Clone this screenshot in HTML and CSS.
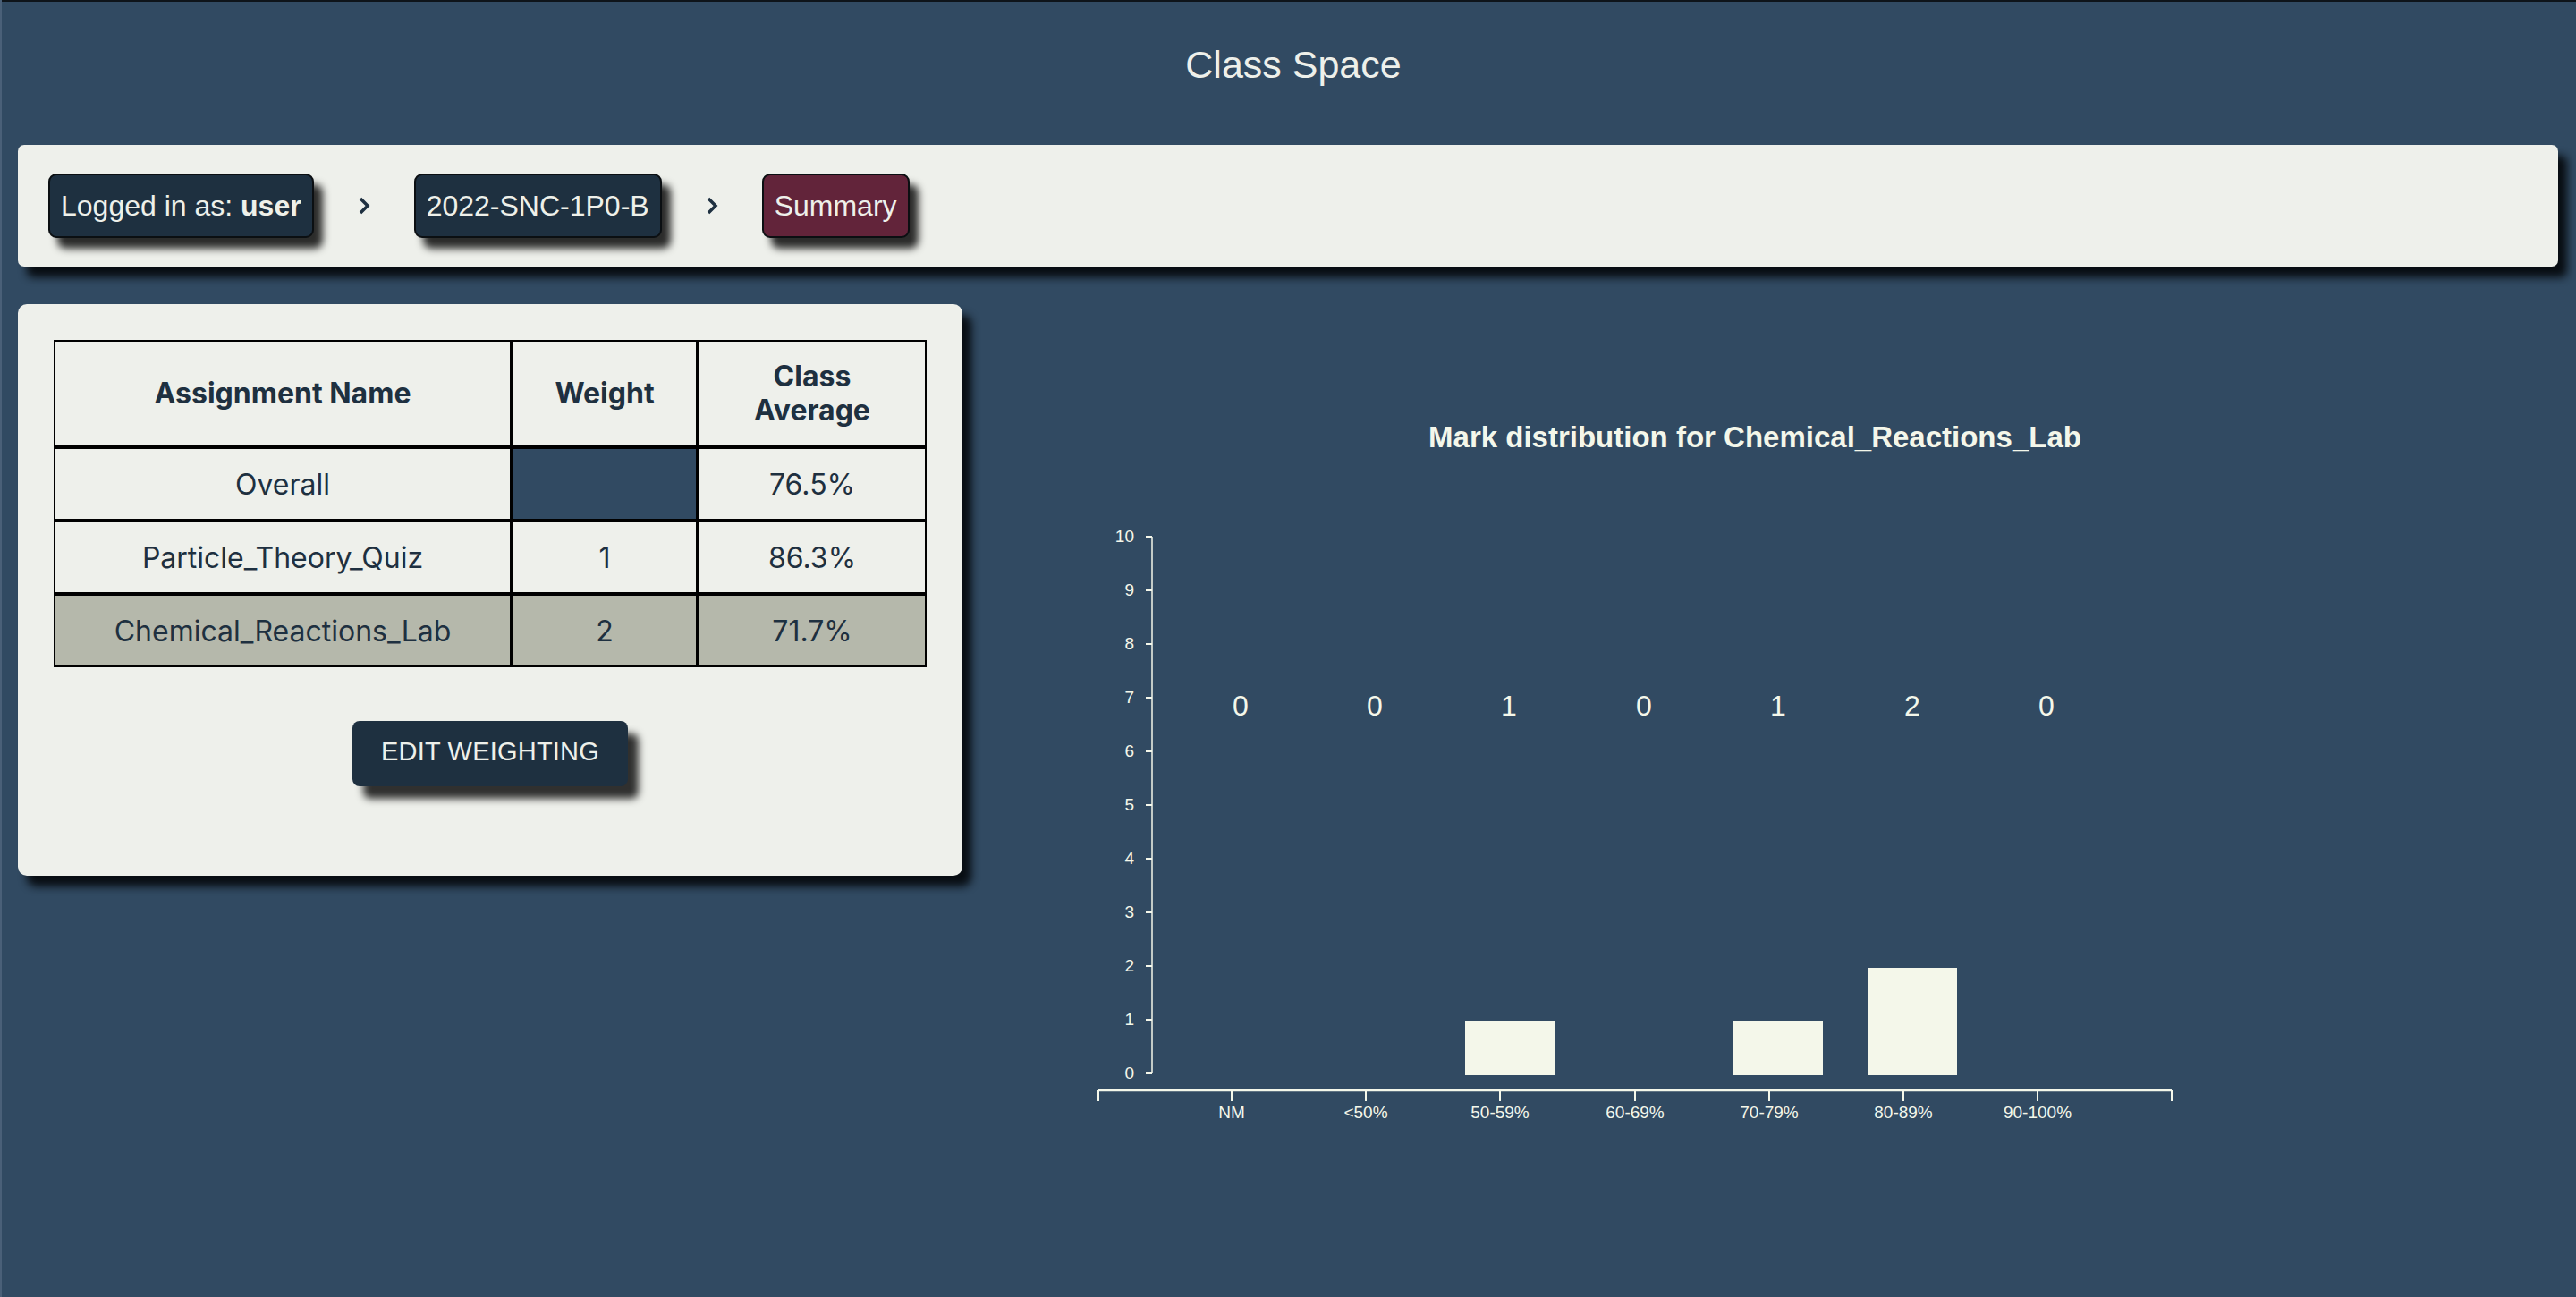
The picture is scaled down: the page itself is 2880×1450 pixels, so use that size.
FILE: index.html
```html
<!DOCTYPE html>
<html lang="en">
<head>
<meta charset="utf-8">
<title>Class Space</title>
<link rel="stylesheet" href="styles.css">
</head>
<body>
<header class="app-header">
  <h1 class="app-title">Class Space</h1>
</header>

<nav class="crumbs">
  <span class="crumb">Logged in as: <b>user</b></span>
  <svg class="chev" width="14" height="20" viewBox="0 0 14 20"><polyline points="3,2 11,10 3,18" fill="none" stroke="#1e3040" stroke-width="3.5"/></svg>
  <span class="crumb">2022-SNC-1P0-B</span>
  <svg class="chev" width="14" height="20" viewBox="0 0 14 20"><polyline points="3,2 11,10 3,18" fill="none" stroke="#1e3040" stroke-width="3.5"/></svg>
  <span class="crumb crumb-active">Summary</span>
</nav>

<main class="content">
  <section class="card">
    <table class="grades">
      <colgroup>
        <col class="c-name">
        <col class="c-weight">
        <col class="c-avg">
      </colgroup>
      <thead>
        <tr class="head-row">
          <th>Assignment Name</th>
          <th>Weight</th>
          <th>Class<br>Average</th>
        </tr>
      </thead>
      <tbody>
        <tr class="row">
          <td>Overall</td>
          <td class="blank"></td>
          <td>76.5%</td>
        </tr>
        <tr class="row">
          <td>Particle_Theory_Quiz</td>
          <td>1</td>
          <td>86.3%</td>
        </tr>
        <tr class="row selected">
          <td>Chemical_Reactions_Lab</td>
          <td>2</td>
          <td>71.7%</td>
        </tr>
      </tbody>
    </table>
    <div class="actions">
      <button class="edit-btn">EDIT WEIGHTING</button>
    </div>
  </section>

  <section class="chart-area">
    <svg class="chart" width="1744" height="960" viewBox="0 0 1744 960">
      <text class="chart-title" x="846" y="160" text-anchor="middle">Mark distribution for Chemical_Reactions_Lab</text>

      <!-- y axis -->
      <line class="axis" x1="172" y1="260" x2="172" y2="860" stroke-width="1.5"/>
      <g class="yticks">
        <line x1="165" y1="260" x2="172" y2="260"/>
        <line x1="165" y1="320" x2="172" y2="320"/>
        <line x1="165" y1="380" x2="172" y2="380"/>
        <line x1="165" y1="440" x2="172" y2="440"/>
        <line x1="165" y1="500" x2="172" y2="500"/>
        <line x1="165" y1="560" x2="172" y2="560"/>
        <line x1="165" y1="620" x2="172" y2="620"/>
        <line x1="165" y1="680" x2="172" y2="680"/>
        <line x1="165" y1="740" x2="172" y2="740"/>
        <line x1="165" y1="800" x2="172" y2="800"/>
        <line x1="165" y1="860" x2="172" y2="860"/>
      </g>
      <g class="ylabels" text-anchor="end">
        <text x="152" y="266">10</text>
        <text x="152" y="326">9</text>
        <text x="152" y="386">8</text>
        <text x="152" y="446">7</text>
        <text x="152" y="506">6</text>
        <text x="152" y="566">5</text>
        <text x="152" y="626">4</text>
        <text x="152" y="686">3</text>
        <text x="152" y="746">2</text>
        <text x="152" y="806">1</text>
        <text x="152" y="866">0</text>
      </g>

      <!-- bars -->
      <rect class="bar" x="522" y="802" width="100" height="60"/>
      <rect class="bar" x="822" y="802" width="100" height="60"/>
      <rect class="bar" x="972" y="742" width="100" height="120"/>

      <!-- counts -->
      <g class="counts" text-anchor="middle">
        <text x="271" y="460">0</text>
        <text x="421" y="460">0</text>
        <text x="571" y="460">1</text>
        <text x="722" y="460">0</text>
        <text x="872" y="460">1</text>
        <text x="1022" y="460">2</text>
        <text x="1172" y="460">0</text>
      </g>

      <!-- x axis -->
      <line class="axis" x1="112" y1="879" x2="1312" y2="879" stroke-width="2.5"/>
      <g class="xticks">
        <line x1="112" y1="879" x2="112" y2="891"/>
        <line x1="261" y1="879" x2="261" y2="891"/>
        <line x1="411" y1="879" x2="411" y2="891"/>
        <line x1="561" y1="879" x2="561" y2="891"/>
        <line x1="712" y1="879" x2="712" y2="891"/>
        <line x1="862" y1="879" x2="862" y2="891"/>
        <line x1="1012" y1="879" x2="1012" y2="891"/>
        <line x1="1162" y1="879" x2="1162" y2="891"/>
        <line x1="1312" y1="879" x2="1312" y2="891"/>
      </g>
      <g class="xlabels" text-anchor="middle">
        <text x="261" y="910">NM</text>
        <text x="411" y="910">&lt;50%</text>
        <text x="561" y="910">50-59%</text>
        <text x="712" y="910">60-69%</text>
        <text x="862" y="910">70-79%</text>
        <text x="1012" y="910">80-89%</text>
        <text x="1162" y="910">90-100%</text>
      </g>
    </svg>
  </section>
</main>
</body>
</html>
```

FILE: styles.css
```css
html {
  background: #314a62;
}

body {
  margin: 0;
  min-height: 1450px;
  background: #314a62;
  font-family: "Liberation Sans", Arial, sans-serif;
  color: #eef0ea;
  box-shadow: inset 2px 0 0 #4a6078, inset 0 2px 0 #0e141a;
}

.app-header {
  height: 142px;
  display: flex;
  align-items: center;
  justify-content: center;
}

.app-title {
  margin: 2px 0 0;
  padding-left: 12px;
  font-family: "Liberation Sans", Arial, sans-serif;
  font-weight: 400;
  font-size: 43px;
  color: #eef0ea;
}

.crumbs {
  margin: 20px 20px 0;
  padding: 32px 32px 32px 34px;
  background: #eef0eb;
  border-radius: 7px;
  display: flex;
  align-items: center;
  box-shadow: 10px 12px 10px rgba(6, 11, 15, 0.95);
}

.crumb {
  display: inline-block;
  box-sizing: border-box;
  height: 72px;
  line-height: 68px;
  padding: 0 12px;
  border: 2px solid #0b0f12;
  border-radius: 9px;
  background: #1e3040;
  color: #eef0ea;
  font-size: 32px;
  box-shadow: 10px 12px 8px rgba(0, 0, 0, 0.82);
}

.crumb b {
  font-weight: 700;
}

.crumb-active {
  background: #62243a;
}

.chev {
  margin: 0 49px;
  flex: none;
}

.content {
  display: flex;
  align-items: flex-start;
  gap: 40px;
  padding: 0 20px;
  margin-top: 42px;
}

.card {
  flex: none;
  width: 1056px;
  box-sizing: border-box;
  padding: 40px 40px 100px;
  background: #eef0eb;
  border-radius: 10px;
  box-shadow: 10px 12px 10px rgba(6, 11, 15, 0.95);
}

.grades {
  width: 976px;
  table-layout: fixed;
  border-collapse: separate;
  border-spacing: 0;
  font-family: Inter, "Liberation Sans", sans-serif;
  font-size: 32px;
  color: #1e3040;
}

.c-name { width: 512px; }
.c-weight { width: 208px; }
.c-avg { width: 256px; }

.grades th,
.grades td {
  border: 2px solid #000;
  padding: 0;
  text-align: center;
  vertical-align: middle;
}

.grades th {
  font-weight: 700;
  line-height: 38px;
}

.head-row {
  height: 120px;
}

.row {
  height: 82px;
}

.grades td {
  font-weight: 400;
}

.grades td.blank {
  background: #314a62;
}

.row.selected td {
  background: #b5b8ab;
}

.actions {
  display: flex;
  justify-content: center;
  margin-top: 60px;
}

.edit-btn {
  font-family: "Liberation Sans", Arial, sans-serif;
  font-size: 29px;
  letter-spacing: 0.2px;
  color: #eef0ea;
  background: #1e3040;
  border: none;
  border-radius: 8px;
  width: 308px;
  height: 73px;
  padding: 0 0 4px;
  box-shadow: 12px 14px 8px rgba(0, 0, 0, 0.8);
}

.chart-area {
  flex: 1;
}

.chart {
  display: block;
  overflow: visible;
  font-family: "Liberation Sans", Arial, sans-serif;
}

.chart-title {
  fill: #f4f7ea;
  font-size: 33px;
  font-weight: 700;
}

.axis {
  stroke: #f4f7ea;
}

.yticks line,
.xticks line {
  stroke: #f4f7ea;
  stroke-width: 2;
}

.ylabels text,
.xlabels text {
  fill: #f4f7ea;
  font-size: 19px;
}

.counts text {
  fill: #f4f7ea;
  font-size: 32px;
}

.bar {
  fill: #f4f7ea;
}
```
